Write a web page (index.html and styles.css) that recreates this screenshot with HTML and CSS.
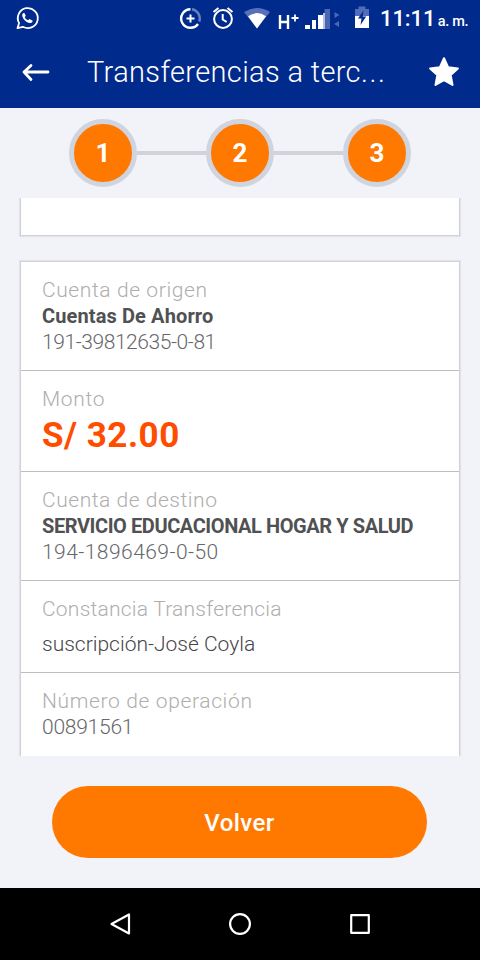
FILE: index.html
```html
<!DOCTYPE html>
<html lang="es">
<head>
<meta charset="utf-8">
<title>Transferencias a terceros</title>
<link rel="stylesheet" href="styles.css">
</head>
<body>
<div class="screen">
  <header class="top">
    <svg class="status-icons" width="370" height="38" viewBox="0 0 370 38" fill="none" stroke="#fff">
      <path d="M17.500 28.200 19.100 23A10 10 0 1 1 22.900 26.800Z" stroke-width="1.800" stroke-linejoin="round"/>
      <path d="M24.2 12.8c-1.6.5-2.4 1.8-1.8 3.8 1 3.1 3.5 5.5 6.6 6.3 2 .5 3.4-.5 3.7-2.2l-3.1-1.700-1.500 1.300c-1.600-.7-2.700-1.700-3.400-3.100l1.100-1.400Z" fill="#fff" stroke="none"/>
      <path d="M190.500 9.200A9.300 9.300 0 1 0 198 24" stroke-width="2.400"/>
      <path d="M192 9.200A9.300 9.300 0 0 1 199.200 21.500" stroke="#687fc0" stroke-width="2.400"/>
      <path d="M190.500 14.500v8M186.500 18.500h8" stroke-width="2"/>
      <circle cx="223" cy="19" r="8.900" stroke-width="2"/>
      <path d="M213.500 12 218.500 8M227.500 8l5 4M222.700 14v5.500l4 2.500" stroke-width="2"/>
      <path d="M244 12Q257 4 270 12L257 28.500Z" fill="#5870b9" stroke="none"/>
      <path d="M248 16.200Q257 10 266 16.200L257 28.500Z" fill="#fff" stroke="none"/>
      <path d="M280 15v14M288 15v14M280 22h8" stroke-width="2.400"/>
      <path d="M295 14.500v7M291.500 18h7" stroke-width="1.800"/>
      <path d="M305 25h5v4h-5zM312 20h4v9h-4zM318 15h5v14h-5z" fill="#fff" stroke="none"/>
      <path d="M324.500 9h5.500v20h-5.500z" fill="#4b66b3" stroke="none"/>
      <path d="M323 13h2v16h-2z" fill="#b5c0df" stroke="none"/>
      <path d="M334.500 12v6l5-3zM339 21v6l-5-3z" fill="#4b66b3" stroke="none"/>
      <path d="M355 17V9h3.500V6.500h7V9h3.500v8z" fill="#526db7" stroke="none"/>
      <path d="M355 16h14v12h-14z" fill="#fff" stroke="none"/>
      <path d="m363.500 10.500-5.500 8h3.500l-1 6.500 5.700-8.500h-3.500z" fill="#002a8c" stroke="none"/>
    </svg>
    <div class="clock">11:11 <span class="meridiem">a. m.</span></div>
    <div class="appbar">
      <svg class="back" width="28" height="22" viewBox="0 0 28 22" fill="none" stroke="#fff" stroke-width="2.800" stroke-linecap="round" stroke-linejoin="round"><path d="M26 11H2M9 4.500 2 11l7 7.500"/></svg>
      <h1 class="title">Transferencias a terc<span class="dots">...</span></h1>
      <svg class="star" width="32" height="32" viewBox="0 0 32 32" fill="#fff" stroke="#fff" stroke-width="2" stroke-linejoin="round"><path d="m16 2.200 4.100 9 9.800 1.200-7.200 6.700 1.800 9.900-8.500-4.800-8.500 4.800 1.800-9.900L2.100 12.400l9.800-1.200z"/></svg>
    </div>
  </header>
  <div class="steps">
    <div class="step">1</div><div class="link"></div><div class="step">2</div><div class="link"></div><div class="step">3</div>
  </div>
  <main class="content">
    <section class="card card-previous"></section>
    <section class="card">
      <div class="row">
        <div class="label origin-label">Cuenta de origen</div>
        <div class="name origin-name">Cuentas De Ahorro</div>
        <div class="value origin-value">191-39812635-0-81</div>
      </div>
      <div class="row row-amount">
        <div class="label amount-label">Monto</div>
        <div class="amount">S/ 32.00</div>
      </div>
      <div class="row">
        <div class="label target-label">Cuenta de destino</div>
        <div class="name target-name">SERVICIO EDUCACIONAL HOGAR Y SALUD</div>
        <div class="value target-value">194-1896469-0-50</div>
      </div>
      <div class="row row-note">
        <div class="label note-label">Constancia Transferencia</div>
        <div class="value note">suscripción-José Coyla</div>
      </div>
      <div class="row row-last">
        <div class="label operation-label">Número de operación</div>
        <div class="value operation-value">00891561</div>
      </div>
    </section>
  </main>
  <footer class="actions"><button class="button">Volver</button></footer>
  <nav class="navbar">
    <svg width="24" height="24" viewBox="0 0 24 24"><path d="M21 2.500v19L3.500 12z"/></svg>
    <svg width="24" height="24" viewBox="0 0 24 24"><circle cx="12" cy="12" r="9.900"/></svg>
    <svg width="24" height="24" viewBox="0 0 24 24"><path d="M3.200 3.200h17.600v17.600H3.200z"/></svg>
  </nav>
</div>
</body>
</html>
```
FILE: styles.css
```css
* { box-sizing: border-box; }
body { margin: 0; font-family: Roboto, "Liberation Sans", sans-serif; }
.screen { width: 480px; height: 960px; display: flex; flex-direction: column; background: #f2f3f8; overflow: hidden; }
.top { height: 108px; flex: none; background: #002a8c; color: #fff; display: grid; grid-template: 38px 70px / 370px 110px; }
.status-icons { display: block; }
.clock { padding-left: 10px; font-size: 22px; line-height: 38px; font-weight: 500; letter-spacing: -0.1px; white-space: nowrap; }
.meridiem { font-size: 14.500px; margin-left: -3px; letter-spacing: -0.3px; }
.appbar { grid-column: 1 / 3; display: flex; align-items: center; padding: 0 20px 2px 22px; }
.title { margin: 0 0 0 37px; width: 341px; font-size: 29px; line-height: 40px; font-weight: 300; letter-spacing: 0.35px; white-space: nowrap; }
.dots { letter-spacing: 1.6px; }
.star { flex: none; }
.steps { height: 90px; flex: none; display: flex; align-items: center; justify-content: center; }
.step { width: 68px; height: 68px; border: 5px solid #d0d4de; border-radius: 50%; background: #ff7900; color: #fff; font-size: 26px; font-weight: 700; line-height: 59px; text-align: center; }
.link { width: 69px; height: 4px; background: #d1d3d9; }
.content { height: 558px; flex: none; overflow: hidden; padding: 0 20px; }
.card { border: 1px solid #d0d1d7; background: #fff; box-shadow: 0 0 1px 1px #e3e4e9; }
.card-previous { height: 38px; border-top: 0; margin-bottom: 25px; }
.row { height: 109px; padding: 15px 21px 0; border-bottom: 1px solid #bdbdc1; line-height: 26px; white-space: nowrap; }
.row-amount { height: 101px; }
.row-note { height: 92px; }
.row-last { height: 100px; }
.label { color: #aeaeae; font-size: 21px; font-weight: 300; }
.name { color: #505153; font-size: 20px; font-weight: 700; }
.value { color: #66676a; font-size: 21px; font-weight: 300; }
.amount { color: #ff4d00; font-size: 35px; line-height: 48px; font-weight: 700; letter-spacing: 0.5px; }
.note { color: #454648; padding-top: 9px; }
.origin-label { letter-spacing: 0.6px; }
.origin-name { letter-spacing: 0.12px; }
.origin-value { letter-spacing: -0.43px; }
.amount-label { letter-spacing: 0.7px; }
.target-label { letter-spacing: 0.54px; }
.target-name { letter-spacing: -0.42px; }
.target-value { letter-spacing: 0.45px; }
.note-label { letter-spacing: 0.23px; }
.operation-label { letter-spacing: 0.64px; }
.operation-value { letter-spacing: -0.25px; }
.actions { height: 132px; flex: none; padding: 30px 53px 0 52px; }
.button { width: 100%; height: 72px; border: 0; border-radius: 36px; background: #ff7900; color: #fff; font-family: inherit; font-size: 24px; font-weight: 500; letter-spacing: 0.45px; padding: 2px 0 0; }
.navbar { height: 72px; flex: none; display: flex; justify-content: center; align-items: center; gap: 96px; background: #000; }
.navbar svg { fill: none; stroke: #fff; stroke-width: 2.2; stroke-linejoin: round; }
```
